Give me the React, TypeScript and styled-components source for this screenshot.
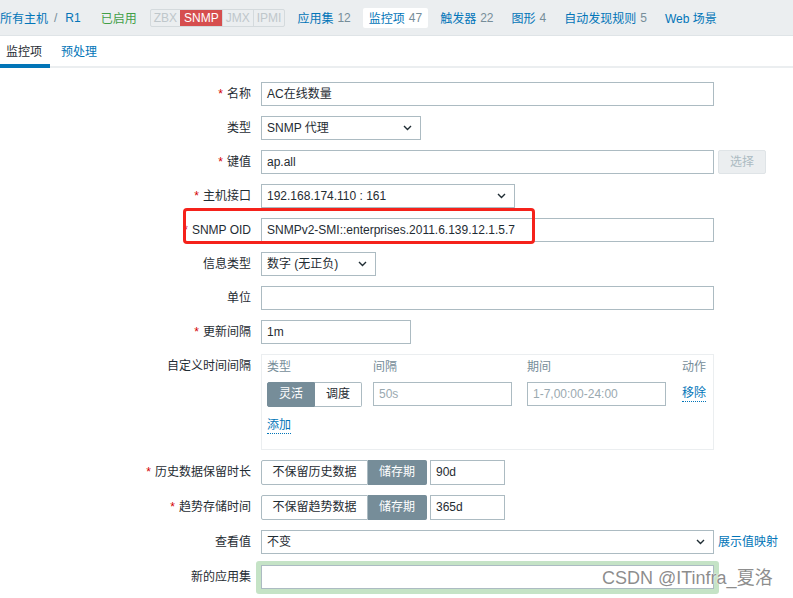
import React from 'react';
import styled, { createGlobalStyle } from 'styled-components';

const GlobalStyle = createGlobalStyle`
  html, body {
    margin: 0;
    padding: 0;
    background: #fff;
    overflow: hidden;
  }
  body {
    font-family: "Liberation Sans", Arial, "Noto Sans CJK SC", sans-serif;
    font-size: 12px;
    color: #1f2c33;
  }
`;

const Page = styled.div`
  position: relative;
  width: 793px;
  height: 598px;
  overflow: hidden;
`;

const Header = styled.div`
  display: flex;
  align-items: center;
  height: 35px;
  background: #ebeef0;
  border-bottom: 1px solid #dfe4e7;
  white-space: nowrap;
`;

const Crumb = styled.a`
  color: #0275b8;
  text-decoration: none;
`;

const Slash = styled.span`
  color: #768d99;
  margin: 0 8px 0 6px;
`;

const Status = styled.span`
  color: #429e47;
  margin-left: 20px;
`;

const Badges = styled.div`
  display: flex;
  margin-left: 13px;
  border: 1px solid #d4dadd;
  border-radius: 2px;
  height: 16px;
`;

const Badge = styled.span<{ $on?: boolean }>`
  padding: 0 3px;
  line-height: 16px;
  color: ${(p) => (p.$on ? '#fff' : '#bfc7cb')};
  background: ${(p) => (p.$on ? '#d64e4e' : 'transparent')};
  border-left: 1px solid ${(p) => (p.$on ? '#d64e4e' : '#d4dadd')};
  &:first-child {
    border-left: none;
  }
`;

const NavItem = styled.a<{ $active?: boolean }>`
  display: flex;
  align-items: center;
  height: 20px;
  padding: 0 6px;
  margin-left: 6px;
  color: #0275b8;
  text-decoration: none;
  background: ${(p) => (p.$active ? '#fff' : 'transparent')};
  border-radius: 2px;
  &:first-of-type {
    margin-left: 10px;
  }
`;

const Count = styled.span`
  color: #768d99;
  margin-left: 4px;
`;

const TabBar = styled.div`
  display: flex;
  gap: 5px;
  height: 32px;
  box-sizing: border-box;
  border-bottom: 2px solid #ebeef0;
`;

const Tab = styled.a<{ $active?: boolean }>`
  display: flex;
  align-items: center;
  height: 32px;
  box-sizing: border-box;
  padding: 0 8px 0 6px;
  margin-bottom: -2px;
  color: ${(p) => (p.$active ? '#1f2c33' : '#0275b8')};
  border-bottom: 4px solid ${(p) => (p.$active ? '#0275b8' : 'transparent')};
  text-decoration: none;
`;

const Form = styled.div`
  display: flex;
  flex-direction: column;
  gap: 10px;
  padding-top: 14px;
`;

const Row = styled.div<{ $gap?: number }>`
  display: flex;
  align-items: flex-start;
  margin-top: ${(p) => p.$gap || 0}px;
`;

const Label = styled.div`
  flex: none;
  width: 251px;
  min-height: 24px;
  margin-right: 10px;
  text-align: right;
  line-height: 24px;
  white-space: nowrap;
`;

const Star = styled.span`
  color: #d40000;
  margin-right: 4px;
`;

const Field = styled.div<{ $w: number; $muted?: boolean }>`
  box-sizing: border-box;
  width: ${(p) => p.$w}px;
  height: 24px;
  border: 1px solid #acbbc2;
  background: #fff;
  padding: 0 5px;
  line-height: 22px;
  color: ${(p) => (p.$muted ? '#9aa9b0' : '#1f2c33')};
  white-space: nowrap;
  overflow: hidden;
`;

const SelectBox = styled(Field)`
  display: flex;
  align-items: center;
  justify-content: space-between;
  padding-right: 8px;
`;

const DisabledButton = styled.div`
  box-sizing: border-box;
  width: 48px;
  height: 24px;
  margin-left: 4px;
  border: 1px solid #dfe4e7;
  border-radius: 2px;
  background: #ebeef0;
  color: #acbbc2;
  text-align: center;
  line-height: 22px;
`;

const Segmented = styled.div`
  display: flex;
  height: 25px;
`;

const Seg = styled.div<{ $active?: boolean; $w: number }>`
  box-sizing: border-box;
  width: ${(p) => p.$w}px;
  height: 100%;
  text-align: center;
  line-height: 23px;
  border: 1px solid ${(p) => (p.$active ? '#768d99' : '#acbbc2')};
  background: ${(p) => (p.$active ? '#768d99' : '#fff')};
  color: ${(p) => (p.$active ? '#fff' : '#1f2c33')};
  &:first-child {
    border-radius: 2px 0 0 2px;
  }
  &:last-child {
    border-radius: 0 2px 2px 0;
  }
  & + & {
    border-left: none;
  }
`;

const TallField = styled(Field)`
  height: 25px;
  line-height: 23px;
  margin-left: 3px;
`;

const Intervals = styled.div`
  box-sizing: border-box;
  width: 453px;
  height: 96px;
  border: 1px solid #ebeef0;
  padding: 4px 5px;
  display: grid;
  grid-template-columns: 106px 154px 155px auto;
  grid-template-rows: 16px 24px auto;
  row-gap: 7px;
  align-items: center;
`;

const ColHead = styled.div`
  color: #768d99;
  line-height: 16px;
`;

const DotLink = styled.a`
  justify-self: start;
  color: #0275b8;
  text-decoration: none;
  border-bottom: 1px dotted #0275b8;
  line-height: 15px;
`;

const AddLink = styled(DotLink)`
  grid-column: 1 / 2;
  margin-top: 5px;
  align-self: start;
`;

const PlainLink = styled.a`
  color: #0275b8;
  margin-left: 4px;
  line-height: 24px;
  text-decoration: none;
  white-space: nowrap;
`;

const Highlight = styled.div`
  margin: -4px -5px -5px;
  padding: 4px 5px 5px;
  border-radius: 3px;
  background: #c5e3c6;
`;

const ListBox = styled.div`
  box-sizing: border-box;
  width: 300px;
  height: 80px;
  border: 1px solid #acbbc2;
`;

const Annotation = styled.div`
  position: absolute;
  left: 183px;
  top: 208px;
  width: 352px;
  height: 36px;
  box-sizing: border-box;
  border: 3px solid #f5221b;
  border-radius: 4px;
  pointer-events: none;
`;

const Watermark = styled.div`
  position: absolute;
  left: 602px;
  top: 566px;
  font-size: 18px;
  line-height: 24px;
  color: rgba(120, 120, 120, 0.85);
  text-shadow: 0 0 1px #fff, 0 0 2px #fff;
  white-space: nowrap;
`;

const Chevron = () => (
  <svg width="9" height="6" viewBox="0 0 9 6">
    <path d="M1 1l3.5 3.5L8 1" fill="none" stroke="#1f2c33" strokeWidth="1.4" />
  </svg>
);

const Select = ({ w, children }: { w: number; children: React.ReactNode }) => (
  <SelectBox $w={w}>
    <span>{children}</span>
    <Chevron />
  </SelectBox>
);

const FormLabel = ({ req, children }: { req?: boolean; children?: React.ReactNode }) => (
  <Label>
    {req && <Star>*</Star>}
    {children}
  </Label>
);

const App = () => (
  <Page>
    <GlobalStyle />
    <Header>
      <Crumb>所有主机</Crumb>
      <Slash>/</Slash>
      <Crumb>R1</Crumb>
      <Status>已启用</Status>
      <Badges>
        <Badge>ZBX</Badge>
        <Badge $on>SNMP</Badge>
        <Badge>JMX</Badge>
        <Badge>IPMI</Badge>
      </Badges>
      <NavItem>
        应用集<Count>12</Count>
      </NavItem>
      <NavItem $active>
        监控项<Count>47</Count>
      </NavItem>
      <NavItem>
        触发器<Count>22</Count>
      </NavItem>
      <NavItem>
        图形<Count>4</Count>
      </NavItem>
      <NavItem>
        自动发现规则<Count>5</Count>
      </NavItem>
      <NavItem>Web 场景</NavItem>
    </Header>
    <TabBar>
      <Tab $active>监控项</Tab>
      <Tab>预处理</Tab>
    </TabBar>
    <Form>
      <Row>
        <FormLabel req>名称</FormLabel>
        <Field $w={453}>AC在线数量</Field>
      </Row>
      <Row>
        <FormLabel>类型</FormLabel>
        <Select w={160}>SNMP 代理</Select>
      </Row>
      <Row>
        <FormLabel req>键值</FormLabel>
        <Field $w={453}>ap.all</Field>
        <DisabledButton>选择</DisabledButton>
      </Row>
      <Row>
        <FormLabel req>主机接口</FormLabel>
        <Select w={254}>192.168.174.110 : 161</Select>
      </Row>
      <Row>
        <FormLabel req>SNMP OID</FormLabel>
        <Field $w={453}>SNMPv2-SMI::enterprises.2011.6.139.12.1.5.7</Field>
      </Row>
      <Row>
        <FormLabel>信息类型</FormLabel>
        <Select w={115}>数字 (无正负)</Select>
      </Row>
      <Row>
        <FormLabel>单位</FormLabel>
        <Field $w={453} />
      </Row>
      <Row>
        <FormLabel req>更新间隔</FormLabel>
        <Field $w={150}>1m</Field>
      </Row>
      <Row>
        <FormLabel>自定义时间间隔</FormLabel>
        <Intervals>
          <ColHead>类型</ColHead>
          <ColHead>间隔</ColHead>
          <ColHead>期间</ColHead>
          <ColHead>动作</ColHead>
          <Segmented>
            <Seg $w={48} $active>
              灵活
            </Seg>
            <Seg $w={47}>调度</Seg>
          </Segmented>
          <Field $w={139} $muted>
            50s
          </Field>
          <Field $w={139} $muted>
            1-7,00:00-24:00
          </Field>
          <DotLink>移除</DotLink>
          <AddLink>添加</AddLink>
        </Intervals>
      </Row>
      <Row>
        <FormLabel req>历史数据保留时长</FormLabel>
        <Segmented>
          <Seg $w={107}>不保留历史数据</Seg>
          <Seg $w={59} $active>
            储存期
          </Seg>
        </Segmented>
        <TallField $w={75}>90d</TallField>
      </Row>
      <Row>
        <FormLabel req>趋势存储时间</FormLabel>
        <Segmented>
          <Seg $w={107}>不保留趋势数据</Seg>
          <Seg $w={59} $active>
            储存期
          </Seg>
        </Segmented>
        <TallField $w={75}>365d</TallField>
      </Row>
      <Row>
        <FormLabel>查看值</FormLabel>
        <Select w={453}>不变</Select>
        <PlainLink>展示值映射</PlainLink>
      </Row>
      <Row $gap={1}>
        <FormLabel>新的应用集</FormLabel>
        <Highlight>
          <Field $w={453} />
        </Highlight>
      </Row>
      <Row>
        <FormLabel />
        <ListBox />
      </Row>
    </Form>
    <Annotation />
    <Watermark>CSDN @ITinfra_夏洛</Watermark>
  </Page>
);

export default App;
